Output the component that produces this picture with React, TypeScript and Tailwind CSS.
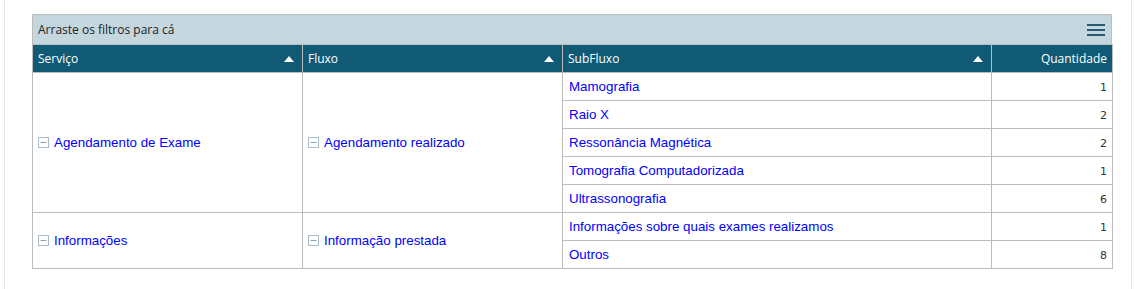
import { Fragment } from 'react';

interface Linha {
  servico: string;
  fluxo: string;
  itens: { sub: string; qtd: number }[];
}

const dados: Linha[] = [
  {
    servico: 'Agendamento de Exame',
    fluxo: 'Agendamento realizado',
    itens: [
      { sub: 'Mamografia', qtd: 1 },
      { sub: 'Raio X', qtd: 2 },
      { sub: 'Ressonância Magnética', qtd: 2 },
      { sub: 'Tomografia Computadorizada', qtd: 1 },
      { sub: 'Ultrassonografia', qtd: 6 },
    ],
  },
  {
    servico: 'Informações',
    fluxo: 'Informação prestada',
    itens: [
      { sub: 'Informações sobre quais exames realizamos', qtd: 1 },
      { sub: 'Outros', qtd: 8 },
    ],
  },
];

// quadradinho de "recolher" ao lado do nome do grupo
function Recolher() {
  return (
    <svg width="11" height="11" viewBox="0 0 11 11" className="inline-block mr-[5px] align-[-1px]">
      <rect x="0.5" y="0.5" width="10" height="10" fill="#fff" stroke="#a9bccb" />
      <line x1="2.5" y1="5.5" x2="8.5" y2="5.5" stroke="#8aa1b3" />
    </svg>
  );
}

function Seta() {
  return (
    <svg width="10" height="6" viewBox="0 0 10 6" className="shrink-0">
      <polygon points="5,0 10,6 0,6" fill="#fff" />
    </svg>
  );
}

export default function App() {
  const cab = 'h-[28px] border border-[#bdbdbd] bg-[#115a75] text-white text-[12px] font-normal px-[5px]';
  const cel = 'border border-[#bdbdbd] px-[5px] text-[13.33px] text-[#0000ff]';
  return (
    <div className="w-full h-[289px] bg-white">
      <div className="ml-[4px] w-[1128px] h-full border-l border-r border-[#e8e8e8] pl-[27px] pt-[14px]">
        <div className="w-[1080px]" style={{ fontFamily: '"Open Sans", sans-serif' }}>
          <div className="h-[31px] border border-[#bdbdbd] bg-[#c4d6de] flex items-center justify-between pl-[5px] pr-[6px]">
            <span className="text-[12px] text-[#222]">Arraste os filtros para cá</span>
            <svg width="18" height="13" viewBox="0 0 18 13">
              <rect x="0" y="1" width="18" height="2" fill="#2a5a72" />
              <rect x="0" y="6" width="18" height="2" fill="#2a5a72" />
              <rect x="0" y="11" width="18" height="2" fill="#2a5a72" />
            </svg>
          </div>
          <table className="w-[1080px] border-collapse table-fixed -mt-[1px]">
            <colgroup>
              <col className="w-[270px]" />
              <col className="w-[260px]" />
              <col className="w-[429px]" />
              <col className="w-[121px]" />
            </colgroup>
            <thead>
              <tr>
                {['Serviço', 'Fluxo', 'SubFluxo'].map(h => (
                  <th key={h} className={cab}>
                    <div className="flex items-center justify-between pr-[3px]">
                      <span>{h}</span>
                      <Seta />
                    </div>
                  </th>
                ))}
                <th className={`${cab} text-right`}>Quantidade</th>
              </tr>
            </thead>
            <tbody style={{ fontFamily: '"Liberation Sans", Arial, sans-serif' }}>
              {dados.map(d => (
                <Fragment key={d.servico}>
                  {d.itens.map((it, i) => (
                    <tr key={it.sub} className="h-[28px]">
                      {i === 0 && (
                        <>
                          <td rowSpan={d.itens.length} className={cel}>
                            <Recolher />
                            {d.servico}
                          </td>
                          <td rowSpan={d.itens.length} className={cel}>
                            <Recolher />
                            {d.fluxo}
                          </td>
                        </>
                      )}
                      <td className={`${cel} pl-[6px]`}>{it.sub}</td>
                      <td
                        className="border border-[#bdbdbd] px-[5px] pt-[3px] text-right text-[11px] text-[#333]"
                        style={{ fontFamily: '"DejaVu Sans", Verdana, sans-serif' }}
                      >
                        {it.qtd}
                      </td>
                    </tr>
                  ))}
                </Fragment>
              ))}
            </tbody>
          </table>
        </div>
      </div>
    </div>
  );
}
